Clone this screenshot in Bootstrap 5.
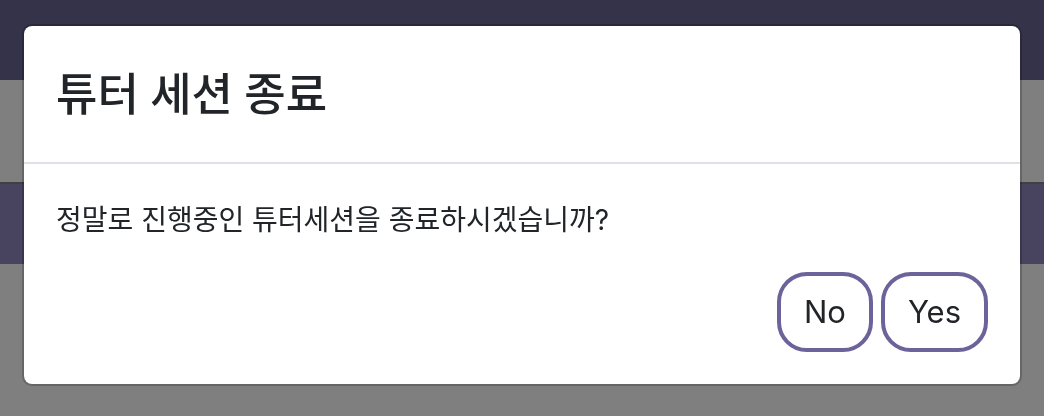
<!DOCTYPE html>
<html lang="ko">
<head>
<meta charset="utf-8">
<meta name="viewport" content="width=device-width, initial-scale=1">
<title>튜터 세션 종료</title>
<link rel="stylesheet" href="https://cdn.jsdelivr.net/npm/bootstrap@5.3.0/dist/css/bootstrap.min.css">
<style>
  body { font-family: Inter, "Noto Sans CJK KR", sans-serif; color: #212529; }
  .page-top { height: 80px; background: #6a6694; }
  .page-space { height: 104px; border-bottom: 2px solid #808080; }
  .page-band { height: 80px; background: #9088c0; }
  .session-dialog { max-width: none; margin: 24px 22px; }
  .session-dialog .modal-content { border: 2px solid rgba(0, 0, 0, .2); border-radius: 10px; }
  .session-dialog .modal-header { padding: 32px; border-bottom: 2px solid #dee2e6; border-radius: 8px 8px 0 0; }
  .session-dialog .modal-title { font-family: Lato, "Noto Sans CJK KR", sans-serif; font-size: 45px; line-height: 72px; font-weight: 500; }
  .session-dialog .modal-body { padding: 32px; }
  .session-text { font-size: 28px; line-height: 48px; margin-bottom: 28px; }
  .btn-session { --bs-btn-color: #212529; --bs-btn-border-color: #6b6399; --bs-btn-hover-color: #fff; --bs-btn-hover-bg: #6b6399; --bs-btn-hover-border-color: #6b6399; --bs-btn-border-width: 4px; --bs-btn-border-radius: 30px; --bs-btn-padding-x: 23px; --bs-btn-padding-y: 12px; --bs-btn-font-size: 31px; --bs-btn-line-height: 48px; }
</style>
</head>
<body>
<div class="page-top"></div>
<div class="page-space"></div>
<div class="page-band"></div>

<div class="modal-backdrop show"></div>
<div class="modal d-block" tabindex="-1" role="dialog" aria-modal="true" aria-labelledby="sessionTitle">
  <div class="modal-dialog session-dialog">
    <div class="modal-content">
      <div class="modal-header">
        <h1 class="modal-title" id="sessionTitle">튜터 세션 종료</h1>
      </div>
      <div class="modal-body">
        <p class="session-text">정말로 진행중인 튜터세션을 종료하시겠습니까?</p>
        <div class="d-flex justify-content-end gap-2">
          <button type="button" class="btn btn-session">No</button>
          <button type="button" class="btn btn-session">Yes</button>
        </div>
      </div>
    </div>
  </div>
</div>
<script src="https://cdn.jsdelivr.net/npm/bootstrap@5.3.0/dist/js/bootstrap.bundle.min.js"></script>
</body>
</html>
